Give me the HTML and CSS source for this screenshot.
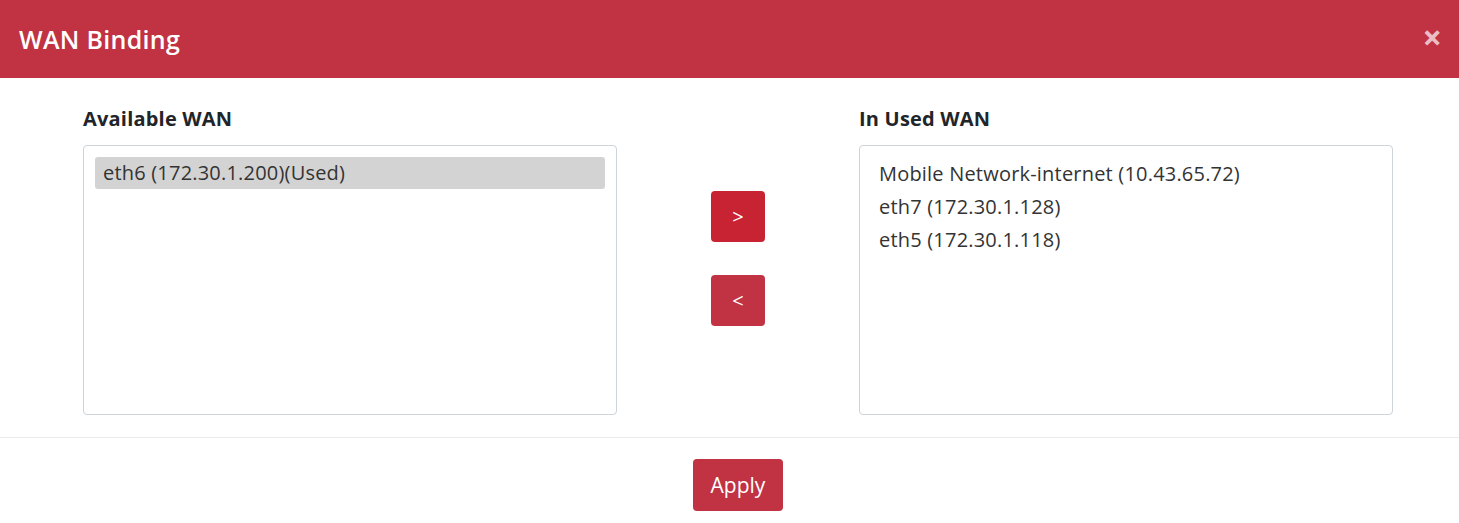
FILE: index.html
```html
<!DOCTYPE html>
<html>
<head>
<meta charset="utf-8">
<link rel="stylesheet" href="styles.css">
</head>
<body>
<div class="modal">
  <div class="modal-header">
    <h5 class="modal-title">WAN Binding</h5>
    <span class="close">&times;</span>
  </div>
  <div class="modal-body">
    <div class="col">
      <div class="label">Available WAN</div>
      <div class="listbox">
        <div class="option selected">eth6 (172.30.1.200)(Used)</div>
      </div>
    </div>
    <div class="mid">
      <button class="btn btn-move active">&gt;</button>
      <button class="btn btn-move">&lt;</button>
    </div>
    <div class="col">
      <div class="label">In Used WAN</div>
      <div class="listbox">
        <div class="option">Mobile Network-internet (10.43.65.72)</div>
        <div class="option">eth7 (172.30.1.128)</div>
        <div class="option">eth5 (172.30.1.118)</div>
      </div>
    </div>
  </div>
  <div class="modal-footer">
    <button class="btn btn-apply">Apply</button>
  </div>
</div>
</body>
</html>
```
FILE: styles.css
```css
* { box-sizing: border-box; }
html, body { margin: 0; padding: 0; background: #fff; }
body {
  font-family: "Open Sans", "Noto Sans", sans-serif;
  color: #212529;
}
.modal { width: 1459px; height: 523px; overflow: hidden; }
.modal-header {
  height: 78px;
  background: #c13243;
  display: flex;
  align-items: center;
  justify-content: space-between;
  padding: 0 17px 0 19px;
}
.modal-title {
  margin: 0;
  font-size: 25px;
  font-weight: 600;
  color: #fff;
  letter-spacing: 0.3px;
}
.close {
  color: rgba(255,255,255,0.7);
  font-size: 34px;
  font-weight: 700;
  line-height: 1;
  margin-top: -4px;
}
.modal-body {
  display: grid;
  grid-template-columns: 534px 242px 534px;
  padding: 26px 0 22px 83px;
  border-bottom: 1px solid #e9ecef;
}
.label {
  font-size: 20px;
  font-weight: 700;
  line-height: 30px;
  margin-bottom: 11px;
  letter-spacing: 0.2px;
}
.listbox {
  height: 270px;
  border: 1px solid #ced4da;
  border-radius: 4px;
  padding: 11px;
}
.option {
  font-size: 20px;
  line-height: 33px;
  padding: 0 8px;
  color: #333;
  letter-spacing: 0.2px;
}
.option.selected {
  background: #d3d3d3;
  border-radius: 3px;
  line-height: 32px;
}
.mid {
  display: flex;
  flex-direction: column;
  align-items: center;
  gap: 33px;
  padding-top: 87px;
}
.btn {
  border: none;
  color: #fff;
  border-radius: 4px;
  font-family: inherit;
  padding: 0;
  cursor: pointer;
}
.btn-move {
  width: 54px;
  height: 51px;
  background: #c13243;
  font-size: 20px;
}
.btn-move.active { background: #c82333; }
.modal-footer {
  display: flex;
  justify-content: center;
  padding: 21px 0 0 83px;
  width: 1393px;
}
.btn-apply {
  width: 90px;
  height: 52px;
  background: #c13243;
  font-size: 21px;
}
```
